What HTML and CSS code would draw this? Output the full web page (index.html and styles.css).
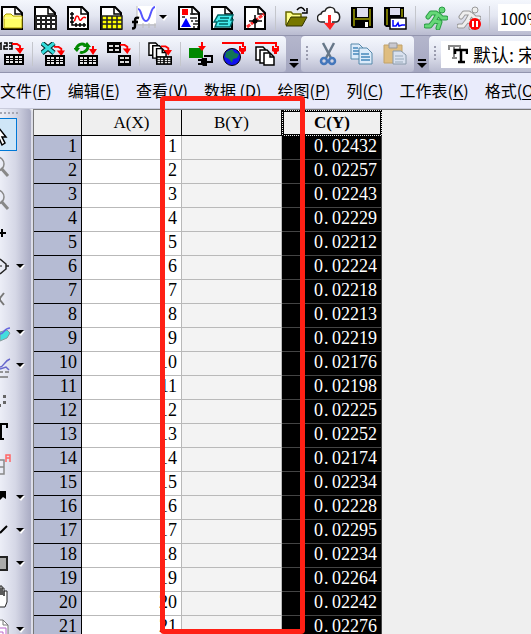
FILE: index.html
```html
<!DOCTYPE html>
<html lang="zh-CN">
<head>
   <meta charset="utf-8">
   <title>worksheet</title>
   <link rel="stylesheet" href="styles.css">
</head>
<body>
   <!-- shared icon parts -->
   <svg class="defs" aria-hidden="true">
      <symbol id="page" viewBox="0 0 24 24"><path d="M2 1h14l6 6v16H2z" fill="#fff" stroke="#000" stroke-width="2"/><path d="M15 1v7h7" fill="none" stroke="#000" stroke-width="1.5"/></symbol>
      <symbol id="grid" viewBox="0 0 20 11"><path d="M0 0h20v11H0z"/><path d="M2 2h3v2H2zm4 0h3v2H6zm5 0h3v2h-3zm4 0h3v2h-3zM2 5h3v1H2zm4 0h3v1H6zm5 0h3v1h-3zm4 0h3v1h-3zM2 7h3v2H2zm4 0h3v2H6zm5 0h3v2h-3zm4 0h3v2h-3z" fill="#e8e8e8"/></symbol>
      <symbol id="drop" viewBox="0 0 9 7"><path d="M1 1h8L5 6z" fill="#fff" transform="translate(0 1)"/><path d="M0 1h8L4 5z"/></symbol>
      <symbol id="redarrow" viewBox="0 0 12 11"><path d="M0 1h5l3 2v4" fill="none" stroke="#f00" stroke-width="2"/><path d="M3 5h9l-4 6z" fill="#f00"/></symbol>
      <symbol id="plug" viewBox="0 0 24 12"><path d="M0 1h21v4" fill="none" stroke="#f00" stroke-width="2"/><path d="M17 4h2v2h3V4h2v5l-2 1v2h-3v-2l-2-1z" fill="#f00"/></symbol>
      <symbol id="stack" viewBox="0 0 20 20"><g fill="#fff" stroke="#000" stroke-width="1.5"><path d="M1 1h7l2 2v11H1z"/><path d="M5 4h7l2 2v11H5z"/><path d="M9 7h6l4 4v8H9z"/><path d="M15 7v4h4" fill="none"/></g></symbol>
   </svg>

   <div class="toolbar">
      <button class="tool" aria-label="新建文件夹"><svg viewBox="0 0 24 24"><use href="#page"/><path d="M4 22V10l2-2h5l2 2h9v12z" fill="#ff6" stroke="#a90"/><path d="M4 12h18" stroke="#fffbb0"/></svg></button>
      <button class="tool" aria-label="新建工作簿"><svg viewBox="0 0 24 24"><use href="#page"/><path d="M3 9h20v14H3z" fill="#fff"/><path d="M3 10h20v13H3zM3 14h20M3 18h20M8 10v13M13 10v13M18 10v13" fill="none" stroke="#222" stroke-width="2"/></svg></button>
      <button class="tool" aria-label="新建图"><svg viewBox="0 0 24 24"><use href="#page"/><path d="M6 6v13h14M4 8h4M4 12h4M4 16h4M10 17v4M14 17v4M18 17v4" fill="none" stroke="#000" stroke-width="1.5"/><path d="M8 15c2-1 1-5 3-5 3 0 1 5 4 4 2-2 2-4 5-2" fill="none" stroke="#f00" stroke-width="1.5"/></svg></button>
      <button class="tool" aria-label="新建矩阵"><svg viewBox="0 0 24 24"><use href="#page"/><path d="M3 10h20v13H3z" fill="#ff0"/><path d="M3 10h20v13H3zM3 14h20M3 18h20M8 10v13M13 10v13M18 10v13" fill="none" stroke="#222" stroke-width="1.5"/></svg></button>
      <button class="tool" aria-label="新建函数图"><svg viewBox="0 0 24 24"><path d="M5 0h19v18H5z" fill="#fff"/><path d="M5 0v19h19M11 17v5M17 17v5M23 17v5" fill="none" stroke="#bbb"/><path d="M6 3c4 0 3 12 8 12S18 1 23 1" fill="none" stroke="#55f" stroke-width="2"/><path d="M7 12c-3-1-4 0-4 3v5c0 2-1 3-4 2M-1 16h7" fill="none" stroke="#000" stroke-width="2.5"/></svg><svg class="drop"><use href="#drop"/></svg></button>
      <button class="tool" aria-label="新建布局"><svg viewBox="0 0 24 24"><use href="#page"/><path d="M5 3h6v6H5z" fill="#f00"/><path d="M9 12l5 9H4z" fill="#00f"/><path d="M13 8h5M13 12h7M5 11h3M14 15h2m2 0h3M16 18h5M16 21h2m2 0h1" stroke="#222" stroke-width="1.5"/></svg></button>
      <button class="tool" aria-label="新建备注"><svg viewBox="0 0 24 24"><use href="#page"/><path d="M8 9h15l-2 5h2l-3 7H5l2-5H4z" fill="#4ee" stroke="#066" stroke-width="1.5"/><path d="M10 12h9M8 15h10M9 18h9" stroke="#066" stroke-width="1.5"/></svg></button>
      <button class="tool" aria-label="数字化图像"><svg viewBox="0 0 24 24"><use href="#page"/><path d="M4 21l17-13" stroke="#f33" stroke-width="3" stroke-dasharray="4 1"/><path d="M12 9v13M6 15h13" stroke="#000" stroke-width="1.5"/><circle cx="12" cy="15" r="2.5"/></svg></button>
      <span class="sep"></span>
      <button class="tool" aria-label="打开"><svg viewBox="0 0 24 24"><path d="M2 19V6h5l2 2h8v5" fill="#ff8" stroke="#660" stroke-width="1.5"/><path d="M2 20l5-9h16l-5 9z" fill="#770" stroke="#330"/><path d="M13 4c3-4 6-3 8 1m2-3v5h-5" fill="none" stroke="#000" stroke-width="1.5"/></svg></button>
      <button class="tool" aria-label="云端下载"><svg viewBox="0 0 24 24"><path d="M8 16H5a4 4 0 0 1-1-8 4 4 0 0 1 4-3c2-5 10-5 10 1 6 0 6 9 1 10h-4" fill="#fff" stroke="#222" stroke-width="1.5"/><path d="M11 9h3v8h4l-5 7-6-7h4z" fill="#f22"/></svg></button>
      <button class="tool" aria-label="保存"><svg viewBox="0 0 24 24"><path d="M1 1h22v21H3l-2-2z"/><path d="M3 3h2v17H3zM19 3h2v17h-2zM5 12h14v2H5z" fill="#770"/><path d="M7 2h11v9H7z" fill="#dde"/><path d="M15 16h3v5h-3z" fill="#fff"/></svg></button>
      <button class="tool" aria-label="保存模板"><svg viewBox="0 0 24 24"><path d="M1 1h20v20H3l-2-2z"/><path d="M3 3h2v16H3zM18 3h2v8h-2z" fill="#770"/><path d="M7 2h10v7H7z" fill="#dde"/><path d="M7 12h16v11H7z" fill="#fff" stroke="#000" stroke-width="1.5"/><path d="M10 14v6h3l2-3 1 3 3-1h3" fill="none" stroke="#00f" stroke-width="1.5"/></svg></button>
      <span class="sep"></span>
      <button class="tool" aria-label="重新计算"><svg viewBox="0 0 24 24"><g fill="none" stroke-linecap="round" stroke-linejoin="round"><path d="M14 8l-4 7 6 1-2 6M10 15l-4 5H2M12 7L7 7l-3 4M15 9l3 3h4" stroke="#2a9a45" stroke-width="5"/><path d="M14 8l-4 7 6 1-2 6M10 15l-4 5H2M12 7L7 7l-3 4M15 9l3 3h4" stroke="#66d878" stroke-width="3"/></g><circle cx="18" cy="4" r="3" fill="#66d878" stroke="#2a9a45"/></svg></button>
      <button class="tool" aria-label="停止计算"><svg viewBox="0 0 24 24"><g fill="none" stroke-linecap="round" stroke-linejoin="round"><path d="M14 8l-4 7 6 1-2 6M10 15l-4 5H2M12 7L7 7l-3 4M15 9l3 3h4" stroke="#999" stroke-width="5"/><path d="M14 8l-4 7 6 1-2 6M10 15l-4 5H2M12 7L7 7l-3 4M15 9l3 3h4" stroke="#eee" stroke-width="3"/></g><circle cx="18" cy="4" r="3" fill="#eee" stroke="#999"/><circle cx="18" cy="18" r="6" fill="#f00"/><path d="M16 15v6M20 15v6" stroke="#fff" stroke-width="2"/></svg></button>
      <span class="sep"></span>
      <input class="zoom" type="text" value="100%" aria-label="缩放">
   </div>

   <div class="toolbar second">
      <div class="group">
         <button class="tool" aria-label="导入 ASCII"><svg viewBox="0 0 24 24"><path d="M0 2l1-1v7M4 1h3v3H4v3h4M9 1h3v6H9m0-3h3" fill="none" stroke="#000" stroke-width="1.5"/><use href="#redarrow" x="12" y="1" width="12" height="11"/><use href="#grid" x="4" y="12" width="20" height="11"/></svg></button>
         <span class="sep"></span>
         <button class="tool" aria-label="导入 Excel"><svg viewBox="0 0 24 24"><path d="M1 1l12 10M13 1L1 11" stroke="#022" stroke-width="5"/><path d="M1 1l12 10M13 1L1 11" stroke="#3dd" stroke-width="3"/><use href="#redarrow" x="13" y="4" width="11" height="10"/><use href="#grid" x="4" y="13" width="20" height="11"/></svg></button>
         <button class="tool" aria-label="重新导入"><svg viewBox="0 0 24 24"><path d="M2 7c2-5 6-6 9-4M14 5c-1 5-6 6-8 5" fill="none" stroke="#080" stroke-width="3"/><path d="M-1 6h7l-3 4zM9 5h8l-4-5z" fill="#080"/><path d="M19 4v5" stroke="#f00" stroke-width="2"/><path d="M15 7h8l-4 6z" fill="#f00"/><use href="#grid" x="4" y="13" width="20" height="11"/></svg></button>
         <button class="tool" aria-label="导入多个文件"><svg viewBox="0 0 24 24"><path d="M0 0h14v11H0z"/><path d="M2 3h4v2H2zm6 0h4v2H8zM2 7h4v2H2zm6 0h4v2H8z" fill="#ddd"/><use href="#redarrow" x="13" y="2" width="11" height="10"/><path d="M11 13h13v11H11z"/><path d="M13 15h4v2h-4zm5 0h4v2h-4zM13 19h4v2h-4zm5 0h4v2h-4z" fill="#ddd"/></svg></button>
         <span class="sep"></span>
         <button class="tool" aria-label="批处理"><svg viewBox="0 0 24 24"><use href="#stack" width="19" height="19"/><use href="#redarrow" x="13" y="3" width="11" height="11"/><use href="#grid" x="8" y="14" width="16" height="9"/></svg></button>
         <span class="sep"></span>
         <button class="tool" aria-label="数据连接器"><svg viewBox="0 0 24 24"><path d="M0 6h14v10H0z" fill="#080"/><path d="M13 0v6" stroke="#f00" stroke-width="2"/><path d="M9 4h8l-4 5z" fill="#f00"/><path d="M15 14h8v6h-6" fill="none" stroke="#000" stroke-width="2"/><path d="M13 16h5v8h-4l-2-2v-4zM9 17h4v2H9zm0 4h4v2H9z"/></svg></button>
         <button class="tool" aria-label="连接网页"><svg viewBox="0 0 24 24"><circle cx="10" cy="15" r="8.5" fill="#11e" stroke="#000"/><path d="M4 10l6-3 3 4 4 1-2 4-4 1-1 4-3-4-4-2z" fill="#175"/><use href="#plug" width="24" height="12"/></svg></button>
         <button class="tool" aria-label="连接多个文件"><svg viewBox="0 0 24 24"><use href="#stack" y="4" width="20" height="20"/><use href="#plug" width="24" height="12"/></svg></button>
      </div>
      <button class="more" aria-label="更多工具"></button>
      <div class="group">
         <span class="grip"></span>
         <button class="tool" aria-label="剪切"><svg viewBox="0 0 24 24"><path d="M6 1l8 15M17 1L9 16" stroke="#678" stroke-width="2.5"/><circle cx="7" cy="19" r="3" fill="none" stroke="#47b" stroke-width="2.5"/><circle cx="15" cy="19" r="3" fill="none" stroke="#47b" stroke-width="2.5"/></svg></button>
         <button class="tool" aria-label="复制"><svg viewBox="0 0 24 24"><g fill="#dcebfa" stroke="#58a"><path d="M1 2h8l4 4v11H1z"/><path d="M9 6h8l5 5v11H9z"/></g><path d="M3 6h5M3 9h6M3 12h6M11 12h8M11 15h9M11 18h9" stroke="#48b" stroke-width="1.5"/></svg></button>
         <button class="tool" aria-label="粘贴"><svg viewBox="0 0 24 24"><path d="M1 3h18v18H1z" fill="#dfbd80" stroke="#c2a269"/><path d="M6 1h8v5H6z" fill="#c8c8d0" stroke="#999"/><path d="M10 9h8l5 4v9H10z" fill="#d9e1ef" stroke="#89a"/><path d="M12 14h8M12 17h9M12 20h8" stroke="#9ab"/></svg></button>
      </div>
      <button class="more" aria-label="更多编辑工具"></button>
      <div class="group last">
         <span class="grip"></span>
         <label class="font">
            <svg viewBox="0 0 20 20" aria-hidden="true"><path d="M1 6V2h11v4M6 2v12M4 14h5" fill="none" stroke="#888" stroke-width="2"/><path d="M7 10V6h12v4M13 6v12M10 18h7" fill="none" stroke="#000" stroke-width="2.5"/></svg>
            <select aria-label="字体"><option>默认: 宋体</option></select>
         </label>
      </div>
   </div>

   <nav class="menu">
      <a href="#">文件(<u>F</u>)</a>
      <a href="#">编辑(<u>E</u>)</a>
      <a href="#">查看(<u>V</u>)</a>
      <a href="#">数据 (<u>D</u>)</a>
      <a href="#">绘图(<u>P</u>)</a>
      <a href="#">列(<u>C</u>)</a>
      <a href="#">工作表(<u>K</u>)</a>
      <a href="#">格式(<u>O</u>)</a>
   </nav>

   <div class="work">
      <div class="palette">
         <button class="pick on" aria-label="指针"><svg viewBox="0 0 16 32"><path d="M-5 4v19l4-4 3 7 3-2-3-6h4z" fill="#fff" stroke="#000" stroke-width="1.5"/></svg></button>
         <button class="pick" aria-label="放大"><svg viewBox="0 0 16 32"><circle cx="-3" cy="12" r="7" fill="none" stroke="#888" stroke-width="1.5"/><path d="M1 16l7 8" stroke="#888" stroke-width="3"/></svg></button>
         <button class="pick" aria-label="缩小"><svg viewBox="0 0 16 32"><circle cx="-3" cy="12" r="7" fill="none" stroke="#888" stroke-width="1.5"/><path d="M1 16l7 8" stroke="#888" stroke-width="3"/></svg></button>
         <button class="pick" aria-label="屏幕读取"><svg viewBox="0 0 16 32"><path d="M0 15h6M2 11v8" stroke="#000" stroke-width="2"/></svg></button>
         <button class="pick" aria-label="数据读取"><svg viewBox="0 0 16 32"><path d="M0 8l6 5v5l-6 5M6 15h3" fill="none" stroke="#222" stroke-width="1.5"/><path d="M0 15h2" stroke="#222"/></svg><svg class="drop"><use href="#drop"/></svg></button>
         <button class="pick" aria-label="数据选择"><svg viewBox="0 0 16 32"><path d="M4 9L0 14v2l4 5" fill="none" stroke="#777" stroke-width="2"/></svg></button>
         <button class="pick" aria-label="屏蔽数据"><svg viewBox="0 0 16 32"><path d="M0 15l7-2 3 3-3 5-7 3z" fill="#4dd" stroke="#899"/><path d="M0 17c4 0 4-6 10-6" fill="none" stroke="#66d" stroke-width="1.5"/></svg><svg class="drop"><use href="#drop"/></svg></button>
         <button class="pick" aria-label="区域选择"><svg viewBox="0 0 16 32"><path d="M0 17c4 0 4-6 10-8M0 19l6-2 3 3" fill="none" stroke="#66c" stroke-width="1.5"/><path d="M0 22h3m2 0h4M0 27h8" stroke="#777" stroke-width="1.5"/></svg><svg class="drop"><use href="#drop"/></svg></button>
         <button class="pick" aria-label="绘制数据"><svg viewBox="0 0 16 32"><path d="M3 12h3v3H3zm0 6h3v3H3zM0 21h1v3H0z" fill="#666"/></svg></button>
         <button class="pick" aria-label="文本"><svg viewBox="0 0 16 32"><path d="M0 8h7v4M1 8v15M0 23h4" fill="none" stroke="#000" stroke-width="2"/></svg></button>
         <button class="pick" aria-label="刻度"><svg viewBox="0 0 16 32"><path d="M0 11h4v14H0M0 18h4" fill="none" stroke="#888" stroke-width="1.5"/><path d="M6 13V6h4v7M6 9h4" fill="none" stroke="#f66" stroke-width="1.5"/></svg></button>
         <button class="pick" aria-label="箭头"><svg viewBox="0 0 16 32"><path d="M0 9h6v8l-3-2-3 3z"/></svg><svg class="drop"><use href="#drop"/></svg></button>
         <button class="pick" aria-label="直线"><svg viewBox="0 0 16 32"><path d="M0 18l7-7" stroke="#000" stroke-width="2"/></svg><svg class="drop"><use href="#drop"/></svg></button>
         <button class="pick" aria-label="矩形"><svg viewBox="0 0 16 32"><path d="M-2 9h9v13h-9z" fill="#aaa" stroke="#222" stroke-width="2"/></svg><svg class="drop"><use href="#drop"/></svg></button>
         <button class="pick" aria-label="平移"><svg viewBox="0 0 16 32"><path d="M-2 17V7h2v7-9h2v9-7h2v8-5h3v11l-2 5h-7z" fill="#fff" stroke="#222"/></svg></button>
         <button class="pick" aria-label="插入"><svg viewBox="0 0 16 32"><path d="M-1 6h4l5 5v16h-9z" fill="#fff" stroke="#777"/><path d="M3 6v5h5" fill="none" stroke="#777"/><path d="M0 14h6v10H0m0-6h3v3H0" fill="none" stroke="#b6c"/></svg><svg class="drop"><use href="#drop"/></svg></button>
      </div>

      <div class="book">
         <table class="sheet">
            <thead>
               <tr><td class="corner"></td><th scope="col">A(X)</th><th scope="col">B(Y)</th><th scope="col" class="picked"><span>C(Y)</span></th></tr>
            </thead>
            <tbody>
               <tr><th scope="row">1</th><td>1</td><td></td><td>0<i>.</i>02432</td></tr>
               <tr><th scope="row">2</th><td>2</td><td></td><td>0<i>.</i>02257</td></tr>
               <tr><th scope="row">3</th><td>3</td><td></td><td>0<i>.</i>02243</td></tr>
               <tr><th scope="row">4</th><td>4</td><td></td><td>0<i>.</i>02229</td></tr>
               <tr><th scope="row">5</th><td>5</td><td></td><td>0<i>.</i>02212</td></tr>
               <tr><th scope="row">6</th><td>6</td><td></td><td>0<i>.</i>02224</td></tr>
               <tr><th scope="row">7</th><td>7</td><td></td><td>0<i>.</i>02218</td></tr>
               <tr><th scope="row">8</th><td>8</td><td></td><td>0<i>.</i>02213</td></tr>
               <tr><th scope="row">9</th><td>9</td><td></td><td>0<i>.</i>02219</td></tr>
               <tr><th scope="row">10</th><td>10</td><td></td><td>0<i>.</i>02176</td></tr>
               <tr><th scope="row">11</th><td>11</td><td></td><td>0<i>.</i>02198</td></tr>
               <tr><th scope="row">12</th><td>12</td><td></td><td>0<i>.</i>02225</td></tr>
               <tr><th scope="row">13</th><td>13</td><td></td><td>0<i>.</i>02252</td></tr>
               <tr><th scope="row">14</th><td>14</td><td></td><td>0<i>.</i>02174</td></tr>
               <tr><th scope="row">15</th><td>15</td><td></td><td>0<i>.</i>02234</td></tr>
               <tr><th scope="row">16</th><td>16</td><td></td><td>0<i>.</i>02228</td></tr>
               <tr><th scope="row">17</th><td>17</td><td></td><td>0<i>.</i>02295</td></tr>
               <tr><th scope="row">18</th><td>18</td><td></td><td>0<i>.</i>02234</td></tr>
               <tr><th scope="row">19</th><td>19</td><td></td><td>0<i>.</i>02264</td></tr>
               <tr><th scope="row">20</th><td>20</td><td></td><td>0<i>.</i>02242</td></tr>
               <tr><th scope="row">21</th><td>21</td><td></td><td>0<i>.</i>02276</td></tr>
            </tbody>
         </table>
      </div>
   </div>

   <div class="marker"></div>
</body>
</html>
```

FILE: styles.css
```css
* {
   box-sizing:border-box;
}
body {
   margin:0;
   height:100vh;
   overflow:hidden;
   display:flex;
   flex-direction:column;
   background:#efefef;
   color:#000;
   font-family:"Noto Sans CJK SC",sans-serif;
   font-size:16px;
}
button {
   padding:0;
   border:0;
   background:none;
}
.defs {
   position:absolute;
   width:0;
   height:0;
}

/* toolbars */
.toolbar {
   display:flex;
   flex:none;
   align-items:center;
   gap:9px;
   height:36px;
   overflow:hidden;
   background:linear-gradient(#f4f7fd,#e4e7f2 45%,#b9bbd0);
   border-bottom:1px solid #9294ae;
}
.tool {
   display:flex;
   flex:none;
   align-items:center;
   gap:3px;
   height:24px;
}
.tool svg {
   width:24px;
   height:24px;
}
.tool .drop , .pick .drop {
   width:9px;
   height:7px;
}
.sep {
   flex:none;
   width:1px;
   height:24px;
   margin:0 -1px;
   background:#c4c6cc;
}
.zoom {
   flex:none;
   width:80px;
   height:27px;
   padding:0 2px;
   border:0;
   background:#fff;
   font:inherit;
}
.second {
   gap:0;
   height:37px;
   align-items:stretch;
   background:#a9abc4;
}
.group {
   display:flex;
   flex:none;
   align-items:center;
   gap:9px;
   padding-right:7px;
   border-radius:0 4px 4px 0;
   background:linear-gradient(#f4f7fd,#e4e7f2 45%,#b9bbd0);
}
.group + .more + .group {
   padding-left:5px;
   border-radius:4px;
}
.more {
   display:flex;
   flex:none;
   flex-direction:column;
   align-items:center;
   justify-content:flex-end;
   gap:2px;
   width:15px;
   padding-bottom:4px;
   background:linear-gradient(#b4b6cc,#a4a6c0);
}
.more:before {
   content:"";
   width:8px;
   height:2px;
   background:#000;
}
.more:after {
   content:"";
   border:5px solid transparent;
   border-top-color:#000;
   border-bottom:0;
}
.grip {
   width:2px;
   height:16px;
   background:repeating-linear-gradient(#9a9cae 0 2px,transparent 2px 4px);
}
.group.last {
   flex:1 0 auto;
   gap:5px;
   padding-right:0;
}
.font {
   display:flex;
   flex:1;
   align-items:center;
   gap:5px;
   height:27px;
   padding-left:7px;
   background:#fff;
}
.font svg {
   width:20px;
   height:20px;
}
.font select {
   appearance:none;
   width:120px;
   border:0;
   padding:0;
   background:none;
   color:#000;
   font:inherit;
   font-size:18px;
}

/* menu */
.menu {
   display:flex;
   flex:none;
   align-items:center;
   gap:16px;
   height:36px;
   padding-bottom:1px;
   overflow:hidden;
   background:#e9ebfb;
   border-bottom:1px solid #c9cbdc;
   white-space:nowrap;
}
.menu a {
   color:#000;
   text-decoration:none;
}
.menu u {
   text-underline-offset:2px;
}

/* palette on the left */
.work {
   display:flex;
   flex:1;
   min-height:0;
}
.palette {
   flex:none;
   width:33px;
   padding-top:9px;
   overflow:hidden;
   border-right:2px solid #dcdde8;
   border-radius:0 4px 0 0;
   background:
      repeating-linear-gradient(90deg,#a4a6b2 0 2px,transparent 2px 4px) 0 3px / 19px 2px no-repeat,
      linear-gradient(90deg,#eceef7,#d5d7e6 50%,#a9abc3);
}
.pick {
   display:flex;
   align-items:center;
   height:33px;
}
.pick svg {
   width:16px;
   height:32px;
}
.pick.on {
   border:1px solid #0078d7;
   border-left:0;
   background:#cfe6f7;
}

/* worksheet */
.book {
   flex:1;
   overflow:hidden;
   border-top:1px solid #777;
   border-left:1px solid #777;
}
.sheet {
   table-layout:fixed;
   width:348px;
   border-spacing:0;
   font-family:"Liberation Serif",serif;
   font-size:18px;
   line-height:20px;
}
.sheet td , .sheet th {
   width:100px;
   height:24px;
   padding:0 4px 3px 0;
   border-right:1px solid #b9b9b9;
   border-bottom:1px solid #b9b9b9;
   background:#fff;
   font-weight:normal;
   text-align:right;
}
.sheet thead th , .sheet thead .corner {
   height:26px;
   padding:0;
   border-color:#000;
   background:#efefef;
   font-size:17px;
   text-align:center;
}
.sheet thead .corner , .sheet tbody th {
   width:48px;
}
.sheet tbody th {
   border-color:#000;
   background:#b5bbd3;
}
.sheet td:nth-child(3) {
   background:#f3f3f3;
}
.sheet td:nth-child(4) {
   border-color:#444;
   background:#000;
   color:#fff;
}
.sheet i {
   display:inline-block;
   width:9px;
   padding-left:1px;
   font-style:normal;
   text-align:left;
}
.sheet thead .picked {
   border:1px dotted #000;
   font-weight:bold;
}
.picked span {
   display:block;
   height:24px;
   border:1px solid #000;
   line-height:22px;
}

/* red frame round column B */
.marker {
   position:absolute;
   top:96px;
   left:160px;
   width:145px;
   height:538px;
   border:5px solid #ff2015;
   border-radius:4px;
}
```
